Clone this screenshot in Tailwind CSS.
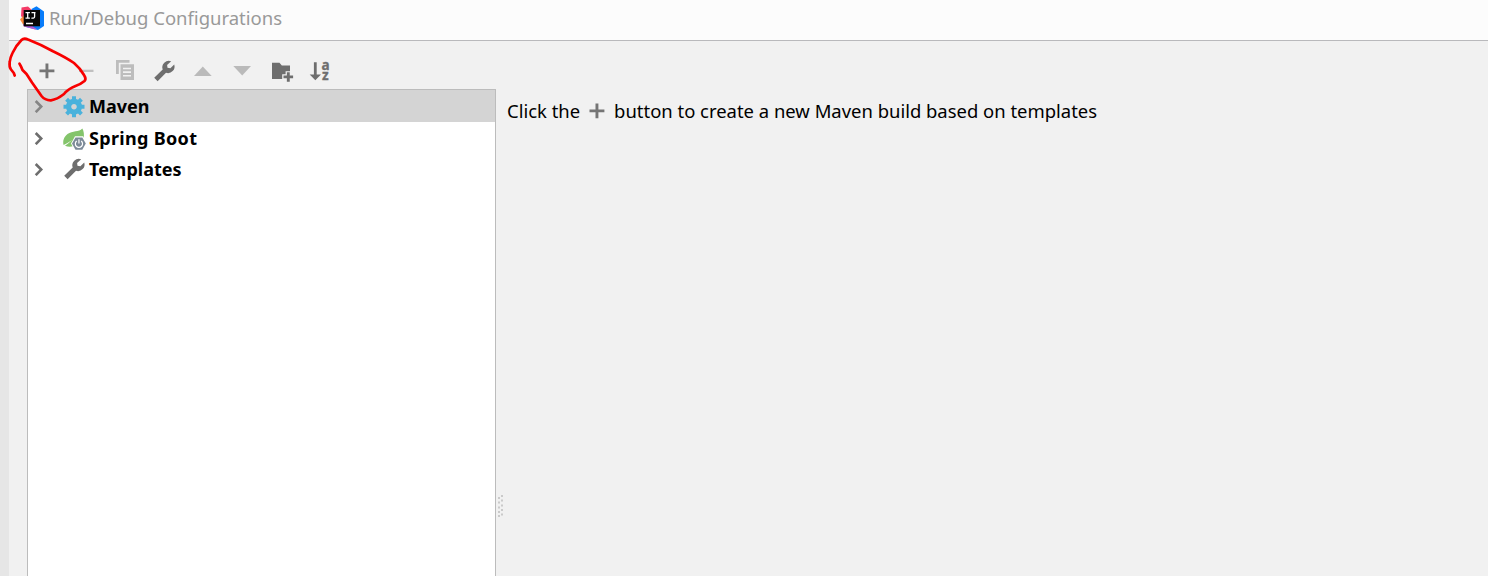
<!DOCTYPE html>
<html lang="en">
<head>
<meta charset="utf-8">
<title>Run/Debug Configurations</title>
<script src="https://cdn.jsdelivr.net/npm/@tailwindcss/browser@4"></script>
</head>
<body class="relative flex h-screen overflow-hidden bg-[#f1f1f1] font-['Noto_Sans','Open_Sans',sans-serif] text-black">
<svg class="hidden">
  <symbol id="wrench" viewBox="0 0 24 24"><path d="M19.2 2.2A6.6 6.6 0 0 0 10.7 10.6L2.2 18.7L5.6 22.2L14 13.8A6.6 6.6 0 0 0 22.2 5.4L18.4 9.2L15.5 8.8L15.1 6.1Z" fill="#6e6e6e"/></symbol>
  <symbol id="plus" viewBox="0 0 24 24"><path d="M10.5 4.5h2.9v6h6v2.8h-6v6h-2.9v-6h-6v-2.8h6z" fill="#757575"/></symbol>
  <symbol id="chevron" viewBox="0 0 10 14"><path d="M1.7 2L7.2 7.6L1.7 13.2" fill="none" stroke="currentColor" stroke-width="2.6"/></symbol>
</svg>
<div class="w-[9px] shrink-0 bg-[#e6e6e6]"></div>
<div class="flex min-w-0 flex-1 flex-col">
  <header class="flex h-[41px] shrink-0 items-start border-b border-[#b9b9bc] bg-[#fcfcfc] pl-[11px] pt-[6px]">
    <svg class="h-6 w-6 shrink-0" viewBox="0 0 24 24">
      <path d="M1.5 1.5L8 .5L13 5L8 18L1 10Z" fill="#f43b67"/>
      <path d="M0 13.5L4 9L8 21L4 20Z" fill="#fc8b3c"/>
      <path d="M11.5 3L16.5 .2L24 5.5V20L18 24L6 21L12 10Z" fill="#087cfa"/>
      <path d="M3 18L9 18L17 23.2L15 23.6L4 20.5Z" fill="#b65ad6"/>
      <path d="M3.7 4H20V20.3H3.7z" fill="#080808"/>
      <path d="M5.5 6.6h4.4M7.7 6.6v5.6M5.5 12.2h4.4M11.5 6.6h4M14.6 6.6v4q0 2-3.2 1.5M6 17.5h7" fill="none" stroke="#fff" stroke-width="1.3"/>
    </svg>
    <h1 class="ml-[5px] whitespace-nowrap text-[18.5px] leading-[24px] text-[#999]">Run/Debug Configurations</h1>
  </header>
  <div class="flex min-h-0 flex-1 pl-[18px]">
    <section class="flex w-[469px] shrink-0 flex-col">
      <div class="flex h-[48px] shrink-0 items-start gap-[15px] pl-[8px] pt-[18px]">
        <svg class="h-6 w-6"><use href="#plus"/></svg>
        <svg class="h-6 w-6" viewBox="0 0 24 24"><path d="M5 10.7h14.5v2.3H5z" fill="#c0c0c0"/></svg>
        <svg class="h-6 w-6" viewBox="0 0 24 24"><path d="M3 1h13.5v2.7H5.8V15H3zM7.5 5.3H21V21H7.5z" fill="#bdbdbd"/><path d="M10 9.5h8M10 13.1h8M10 16.7h8" stroke="#f1f1f1" stroke-width="1.6"/></svg>
        <svg class="h-6 w-6"><use href="#wrench"/></svg>
        <svg class="h-6 w-6" viewBox="0 0 24 24"><path d="M3 17L11.8 7.5L20.7 17z" fill="#bababa"/></svg>
        <svg class="h-6 w-6" viewBox="0 0 24 24"><path d="M3.3 7H21L12.2 16.5z" fill="#bababa"/></svg>
        <svg class="h-6 w-6 overflow-visible" viewBox="0 0 24 24"><path d="M3 3.8h7.5L12.8 6.5H21V20H3z" fill="#6e6e6e"/><path d="M19.3 12.2v11M13.2 17.9h11" stroke="#f1f1f1" stroke-width="5.4"/><path d="M19.3 13.2v9.6M14.5 17.9h9.6" stroke="#6e6e6e" stroke-width="2.9"/></svg>
        <svg class="h-6 w-6 overflow-visible" viewBox="0 0 24 24"><path d="M5.9 3.3h2.8v12.2H13L7.3 21.2L1.7 15.5h4.2z" fill="#6e6e6e"/><text font-size="13.5" font-weight="700" fill="#6e6e6e" stroke="#6e6e6e" stroke-width=".3"><tspan x="13.6" y="10.6">a</tspan><tspan x="14" y="21">z</tspan></text></svg>
      </div>
      <div class="min-h-0 flex-1 border-l border-r border-t border-[#bcbcbc] bg-white text-[18px] font-bold leading-[32px]">
        <div class="flex h-[32px] items-center bg-[#d4d4d4] pl-[6px]">
          <svg class="h-[14px] w-[10px] text-[#858585]"><use href="#chevron"/></svg>
          <svg class="ml-[18px] h-6 w-6 shrink-0" viewBox="-12 -12.7 24 24">
            <circle r="5.4" fill="none" stroke="#4ab2dc" stroke-width="5.2"/>
            <path d="M-2-10.5h4V-6h-4zM-2 6h4v4.5h-4zM-10.5-2H-6v4h-4.5zM6-2h4.5v4H6z" fill="#4ab2dc"/>
            <path transform="rotate(45)" d="M-2-10.5h4V-6h-4zM-2 6h4v4.5h-4zM-10.5-2H-6v4h-4.5zM6-2h4.5v4H6z" fill="#4ab2dc"/>
          </svg>
          <span class="ml-[3px] whitespace-nowrap">Maven</span>
        </div>
        <div class="flex h-[32px] items-center pl-[6px]">
          <svg class="h-[14px] w-[10px] text-[#6e6e6e]"><use href="#chevron"/></svg>
          <svg class="ml-[18px] h-6 w-6 shrink-0 overflow-visible" viewBox="0 0 24 24">
            <path d="M20.3 2.5C17 6.3 10.5 4.5 5.5 8C1.7 11 .6 15 1.6 19Q6 17 10.5 13.8Q6.5 17.5 3 19.7C6 21.2 9.5 21 11.5 20L21.5 13C22.5 8.5 21.8 5 20.3 2.5Z" fill="#84c46b"/>
            <path d="M13 10.2h8L25 17.6L21 25h-8L9 17.6z" fill="#fff"/>
            <path d="M13.5 11.4h6.8L23.8 17.6L20.3 23.8h-6.8L10 17.6z" fill="#7d8b99"/>
            <path d="M14.7 15A3.6 3.6 0 1 0 19.2 15M16.95 13.3v4.2" fill="none" stroke="#fff" stroke-width="1.2"/>
          </svg>
          <span class="ml-[3px] whitespace-nowrap tracking-[0.32px]">Spring Boot</span>
        </div>
        <div class="flex h-[30px] items-center pl-[6px]">
          <svg class="h-[14px] w-[10px] text-[#6e6e6e]"><use href="#chevron"/></svg>
          <svg class="ml-[18px] h-6 w-6 shrink-0"><use href="#wrench"/></svg>
          <span class="ml-[3px] whitespace-nowrap">Templates</span>
        </div>
      </div>
    </section>
    <div class="flex w-[11px] shrink-0 items-end pb-[58px] pl-[2px]">
      <svg class="h-6 w-[7px]" viewBox="0 0 7 24"><path d="M0 3h2v2H0zM3 1h2v2H3zM0 7.5h2v2H0zM3 5.5h2v2H3zM0 12.5h2v2H0zM3 10.5h2v2H3zM0 17h2v2H0zM3 15h2v2H3zM0 21h2v2H0zM3 19.5h2v2H3z" fill="#cacaca"/></svg>
    </div>
    <main class="flex h-[141px] items-start pt-[58px] text-[18.45px] leading-[24px]">
      <span class="whitespace-nowrap">Click the</span>
      <svg class="ml-[4.5px] h-6 w-6 shrink-0"><use href="#plus"/></svg>
      <span class="ml-[5.5px] whitespace-nowrap">button to create a new Maven build based on templates</span>
    </main>
  </div>
</div>
<svg class="pointer-events-none absolute left-0 top-0 h-[110px] w-[100px]" viewBox="0 0 100 110" fill="none" stroke="#f80000" stroke-width="2.7" stroke-linecap="round" stroke-linejoin="round"><path d="M14.7 75.5L13.8 73L11 69.5Q9 67 9.7 62Q10 58 12.5 53Q16 45.5 21.5 40Q24 37.5 28 39.5Q42 45 53 51.2Q67 58 74 63Q80 68 84 75Q86.5 79 84.5 81Q81 84 75.5 86Q68 89 64 94Q57 99.5 51 100.3Q45 100.5 41.5 96L32 82.5L26.5 74L22.5 70Q21 66 19.5 63.7"/></svg>
</body>
</html>
